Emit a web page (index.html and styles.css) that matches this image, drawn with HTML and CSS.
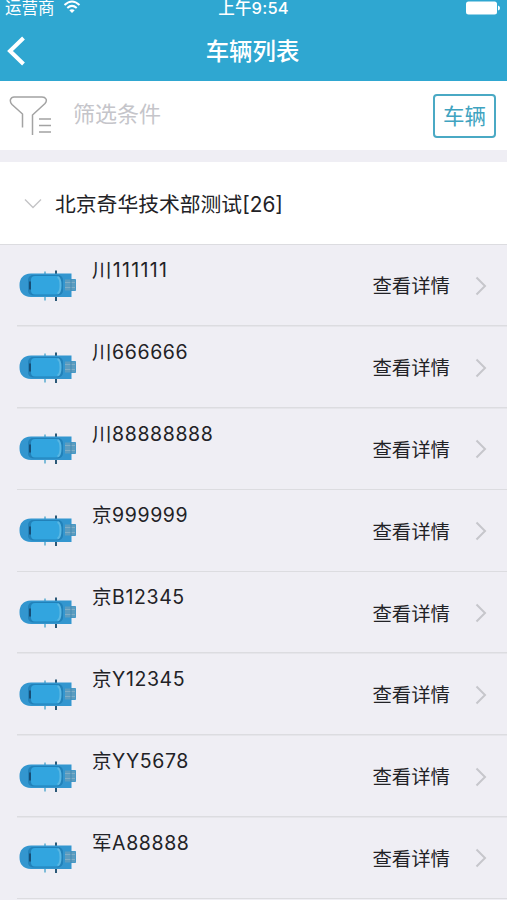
FILE: index.html
```html
<!DOCTYPE html>
<html lang="zh-CN">
<head>
  <meta charset="UTF-8">
  <meta name="viewport" content="width=device-width, initial-scale=1">
  <title>车辆列表</title>
  <link rel="stylesheet" href="styles.css">
</head>
<body>
  <!-- shared icons -->
  <svg class="sprite" width="0" height="0">
    <symbol id="car" viewBox="0 0 60 34">
      <path d="M28 2.500v4M28 27.500v4" stroke="#7dbbd8" stroke-width="2"/>
      <path d="M39 1.500v5M39 27.500v4.500" stroke="#2b5877" stroke-width="2"/>
      <path d="M14 4.500H54.500V10H58q1 0 1 1V21q0 1-1 1H54.500v6H14C6 28 2.500 23 2.500 16.300S6 4.500 14 4.500z" fill="#3396cf"/>
      <path d="M48 10.500h10.500v11H48z" fill="#5c9cbf"/>
      <path d="M48 13.500h10M48 18.500h10" stroke="#7fadc6" stroke-width="1"/>
      <path d="M54 10v12" stroke="#4389b3" stroke-width="1"/>
      <rect x="11" y="6" width="35" height="20.500" rx="5" fill="#2181b9"/>
      <rect x="14" y="7" width="29" height="18.500" rx="4" fill="#32a5df"/>
      <path d="M40.500 8q3 1 3 8.300t-3 8.200" fill="none" stroke="#59b7e3" stroke-width="2"/>
      <path d="M13 12.500v8" stroke="#174d75" stroke-width="2"/>
    </symbol>
    <symbol id="arrow" viewBox="0 0 12 20">
      <path d="M1.500 1.500L10 10L1.500 18.500" fill="none" stroke="#c6c6cb" stroke-width="2"/>
    </symbol>
  </svg>

  <header class="header">
    <div class="status">
      <div class="carrier">
        <span>运营商</span>
        <svg class="wifi" width="18" height="14" viewBox="0 0 18 14" fill="none" stroke="#fff" stroke-width="2">
          <path d="M1.500 5Q9-2 16.500 5M4.300 8Q9 3.800 13.700 8"/>
          <path d="M9 13L6.300 10.300Q9 8.200 11.700 10.300z" fill="#fff" stroke="none"/>
        </svg>
      </div>
      <div class="time">上午9:54</div>
      <svg class="battery" width="34" height="14" viewBox="0 0 34 14" fill="#fff">
        <rect x="0" y="0.500" width="31" height="13" rx="2.500"/>
        <path d="M32 4.500q2 .5 2 2.500t-2 2.500z"/>
      </svg>
    </div>
    <div class="navbar">
      <svg class="back" width="20" height="30" viewBox="0 0 20 30">
        <path d="M17.500 2L4 15L17.500 28" fill="none" stroke="#fff" stroke-width="4"/>
      </svg>
      <h1 class="title">车辆列表</h1>
    </div>
  </header>

  <div class="filter">
    <svg class="funnel" width="44" height="42" viewBox="0 0 44 42" fill="none" stroke="#a3a3a3" stroke-width="1.500">
      <path d="M13.500 32.500V19L3 9.500Q0.800 7 1.500 4.500Q2.500 2 5 2H33Q36 2 37 4T36 8.500L23.500 20V40"/>
      <path d="M30 24H42M30 30.500H42M30 37H42"/>
    </svg>
    <div class="placeholder">筛选条件</div>
    <button class="type">车辆</button>
  </div>

  <div class="group">
    <svg class="chevron" width="18" height="11" viewBox="0 0 18 11">
      <path d="M1 1.500L9 9.500L17 1.500" fill="none" stroke="#c4c4c6" stroke-width="1.400"/>
    </svg>
    <span class="name">北京奇华技术部测试[26]</span>
  </div>

  <div class="list">
    <div class="row">
      <svg class="car"><use href="#car"/></svg>
      <div class="cell"><span class="plate ones">川111111</span><span class="detail">查看详情</span><svg class="arrow"><use href="#arrow"/></svg></div>
    </div>
    <div class="row">
      <svg class="car"><use href="#car"/></svg>
      <div class="cell"><span class="plate">川666666</span><span class="detail">查看详情</span><svg class="arrow"><use href="#arrow"/></svg></div>
    </div>
    <div class="row">
      <svg class="car"><use href="#car"/></svg>
      <div class="cell"><span class="plate">川88888888</span><span class="detail">查看详情</span><svg class="arrow"><use href="#arrow"/></svg></div>
    </div>
    <div class="row">
      <svg class="car"><use href="#car"/></svg>
      <div class="cell"><span class="plate">京999999</span><span class="detail">查看详情</span><svg class="arrow"><use href="#arrow"/></svg></div>
    </div>
    <div class="row">
      <svg class="car"><use href="#car"/></svg>
      <div class="cell"><span class="plate">京B12345</span><span class="detail">查看详情</span><svg class="arrow"><use href="#arrow"/></svg></div>
    </div>
    <div class="row">
      <svg class="car"><use href="#car"/></svg>
      <div class="cell"><span class="plate">京Y12345</span><span class="detail">查看详情</span><svg class="arrow"><use href="#arrow"/></svg></div>
    </div>
    <div class="row">
      <svg class="car"><use href="#car"/></svg>
      <div class="cell"><span class="plate">京YY5678</span><span class="detail">查看详情</span><svg class="arrow"><use href="#arrow"/></svg></div>
    </div>
    <div class="row">
      <svg class="car"><use href="#car"/></svg>
      <div class="cell"><span class="plate">军A88888</span><span class="detail">查看详情</span><svg class="arrow"><use href="#arrow"/></svg></div>
    </div>
  </div>
</body>
</html>
```
FILE: styles.css
```css
* {
  box-sizing: border-box;
}

body {
  margin: 0;
  height: 900px;
  overflow: hidden;
  background: #efeef4;
  color: #222226;
  font-family: Inter, "Noto Sans CJK SC", sans-serif;
}

.sprite {
  display: none;
}

svg {
  display: block;
  flex: none;
}

.header {
  height: 81px;
  background: #2fa7d1;
  color: #fff;
}

.status {
  display: grid;
  grid-template-columns: 1fr auto 1fr;
  height: 20px;
  padding: 0 7px 0 5px;
  font-size: 16.5px;
  line-height: 17px;
}

.carrier {
  display: flex;
  gap: 8px;
}

.time {
  padding-left: 2px;
  font-weight: 500;
  letter-spacing: 0.2px;
}

.battery {
  justify-self: end;
  margin-top: 1px;
}

.navbar {
  display: grid;
  grid-template-columns: 1fr auto 1fr;
  align-items: center;
  height: 61px;
  padding: 0 8px 0 6px;
}

.title {
  margin: 0;
  padding-top: 2px;
  font-size: 23.4px;
  font-weight: 500;
  line-height: 30px;
}

/* search bar */
.filter {
  display: flex;
  align-items: center;
  height: 69px;
  padding: 0 11px 0 9px;
  background: #fff;
}

.placeholder {
  flex: 1;
  padding: 0 0 3px 20px;
  color: #c5c5ca;
  font-size: 22px;
  line-height: 30px;
}

.type {
  width: 63px;
  height: 44px;
  padding: 0;
  border: 2px solid #4aa9c4;
  border-radius: 4px;
  background: #fff;
  color: #3fa3c0;
  font-family: inherit;
  font-size: 21.5px;
  line-height: 30px;
}

.group {
  display: flex;
  align-items: center;
  gap: 13px;
  height: 83px;
  margin-top: 12px;
  padding-left: 24px;
  border-bottom: 1px solid #dcdce0;
  background: #fff;
  font-size: 20.8px;
  line-height: 30px;
}

.name {
  padding-top: 3px;
}

/* vehicles */
.row {
  display: flex;
  align-items: center;
  height: 81.8px;
  padding-left: 17px;
  background: linear-gradient(#dcdce0, #dcdce0) 17px 100% / 100% 1.5px no-repeat;
}

.car {
  width: 60px;
  height: 34px;
}

.cell {
  display: flex;
  flex: 1;
  align-items: center;
  height: 100%;
  padding: 0 20px 0 15px;
}

.plate {
  flex: 1;
  align-self: flex-start;
  padding-top: 10px;
  font-size: 19.5px;
  line-height: 30px;
  letter-spacing: 0.6px;
}

.ones {
  letter-spacing: 1.3px;
}

.detail {
  padding-top: 1px;
  font-size: 19.4px;
  line-height: 30px;
}

.arrow {
  width: 12px;
  height: 20px;
  margin-left: 25px;
}
```
